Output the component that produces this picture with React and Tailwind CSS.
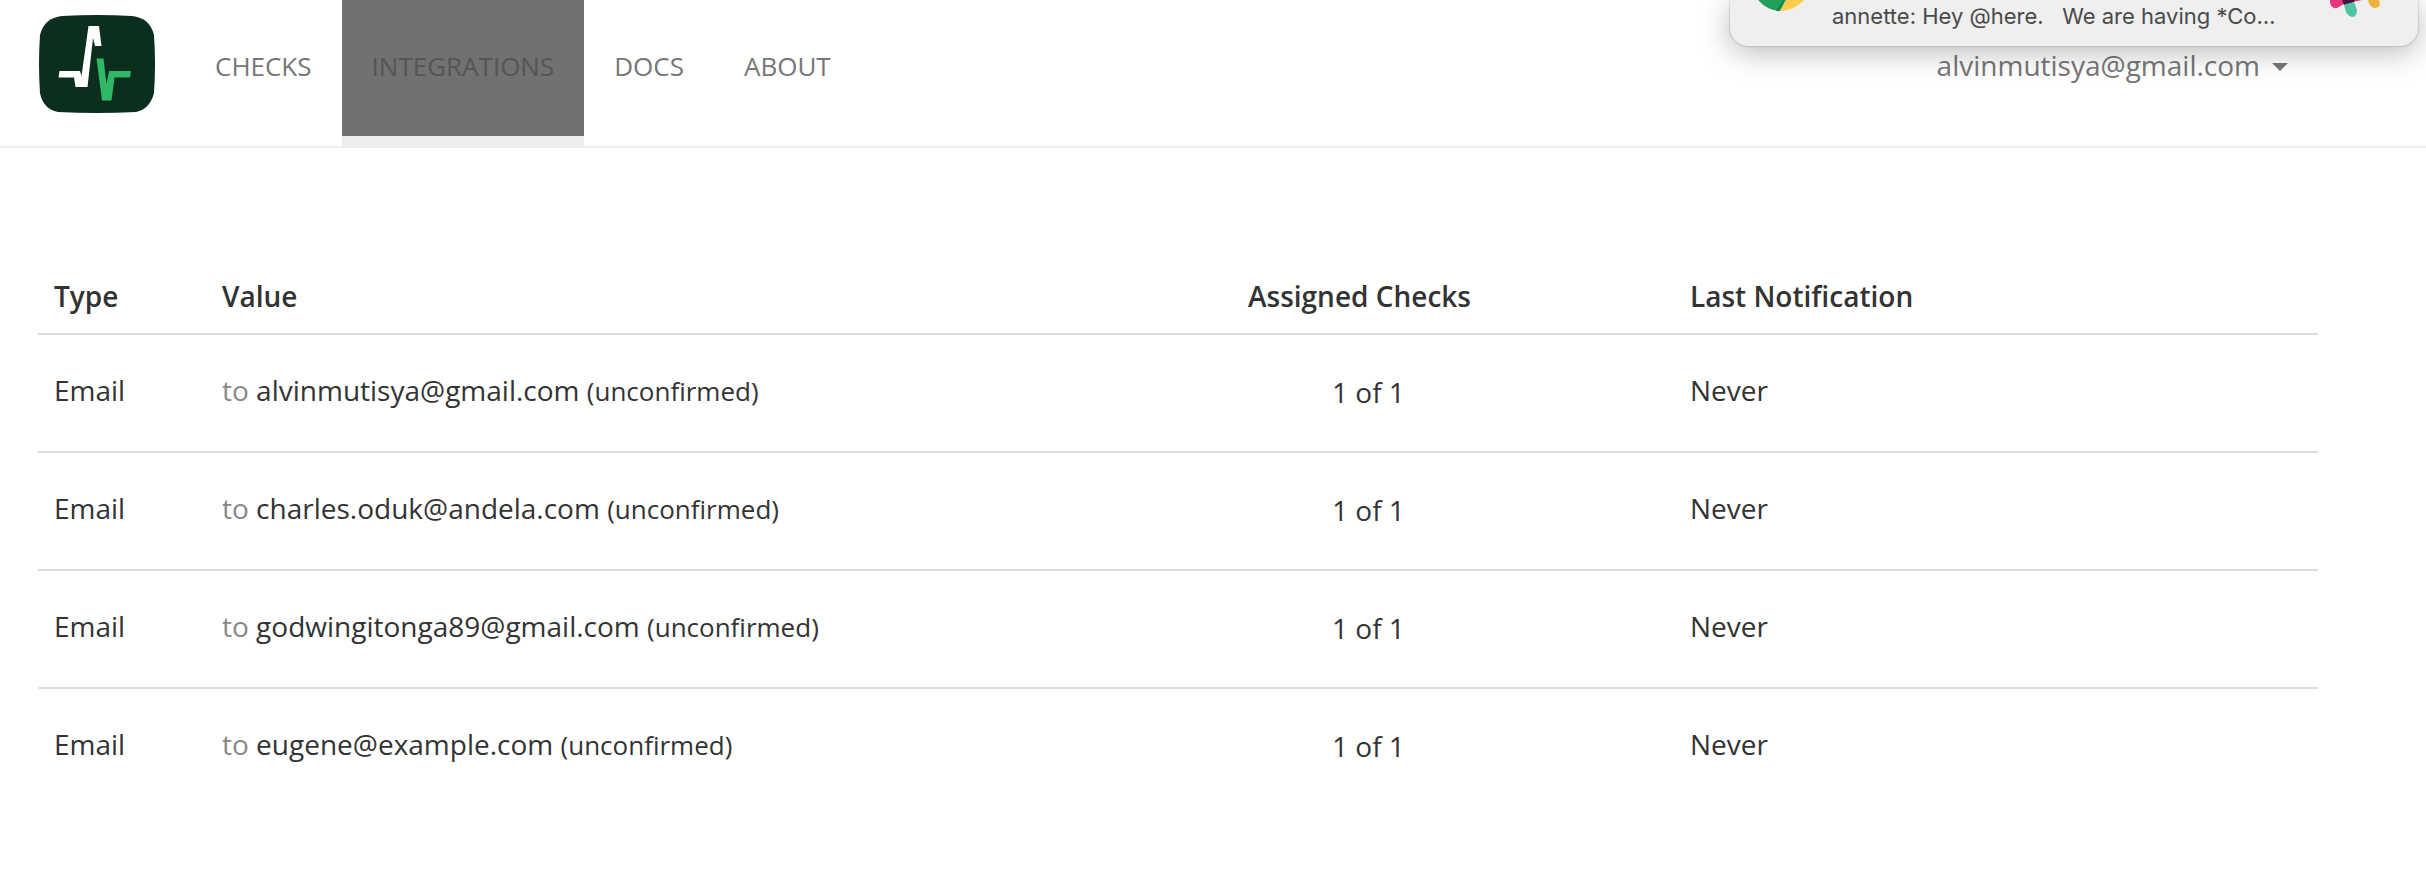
const navItems = [
  { label: "CHECKS" },
  { label: "INTEGRATIONS", active: true },
  { label: "DOCS" },
  { label: "ABOUT" },
];

const channels = [
  "alvinmutisya@gmail.com",
  "charles.oduk@andela.com",
  "godwingitonga89@gmail.com",
  "eugene@example.com",
];

function Logo() {
  return (
    <svg className="h-[98px] w-[116px]" viewBox="0 0 116 98" role="img" aria-label="Healthchecks">
      <path
        d="M23 1 Q58 -1 93 1 Q111 3 115 20 Q117 49 115 78 Q111 94 97 97 Q58 99 19 97 Q4 94 1 78 Q-1 49 1 20 Q5 3 23 1 Z"
        fill="#0b2e1d"
      />
      <path
        d="M20.500 56 H41 L42.500 61 L49.500 11 H60 L62.500 31 H56 L54 23 L48.500 72 H36.500 L35 62.500 H19.500 Z"
        fill="#fff"
      />
      <path d="M57.500 43.500 H64.500 L67.500 69 L70 56 H92 L91 62.500 H75.500 L72.500 85.500 H63 Z" fill="#2fb966" />
    </svg>
  );
}

function ChromeIcon() {
  return (
    <svg className="h-3 w-14 shrink-0" viewBox="0 0 56 12" aria-hidden="true">
      <path d="M4 0 Q14 11 26 11 L32 0 Z" fill="#239f5c" />
      <path d="M32 0 H50 Q40 11 26 11 Z" fill="#fecb4e" />
      <path d="M25 11 L31 0 H29 L22 11 Z" fill="#178349" />
    </svg>
  );
}

function SlackIcon() {
  return (
    <svg className="h-5 w-14 shrink-0" viewBox="0 0 56 20" aria-hidden="true">
      <path d="M4 0 H36 L18 4 L11 8 Q5 9 4 2 Z" fill="#e8367c" />
      <path d="M16 0 H29 L28 2 L18 5 Z" fill="#40173f" />
      <path d="M18 5 L28 2 L31 10 Q31 17 26 17 Q22 16 20 12 Z" fill="#52c3a3" />
      <path d="M42 0 H53 Q56 7 49 8 Q44 8 42 0 Z" fill="#ecb33c" />
    </svg>
  );
}

function Notification() {
  return (
    <aside className="absolute top-0 right-2 flex h-[46px] w-[688px] items-start rounded-b-[18px] bg-[#efefef] pl-6 pr-9 font-[Inter,sans-serif] text-[22px] leading-8 text-[#4a4a4a] shadow-[0_6px_30px_rgba(0,0,0,0.28),0_0_2px_rgba(0,0,0,0.35)]">
      <ChromeIcon />
      <p className="ml-[22px] grow whitespace-pre">annette: Hey @here.   We are having *Co…</p>
      <SlackIcon />
    </aside>
  );
}

export default function App() {
  return (
    <div className="relative min-h-screen overflow-hidden bg-white font-['Open_Sans',sans-serif] text-[28px] leading-10 text-[#333]">
      <header className="flex items-start border-b-2 border-[#eee] pr-[138px] pl-[39px] text-[#777]">
        <a href="#" className="mt-[15px] mr-[30px]">
          <Logo />
        </a>
        <nav className="flex text-[26px]">
          {navItems.map((item) => (
            <a
              key={item.label}
              href="#"
              className={
                item.active
                  ? "border-b-10 border-[#eee] bg-[#717171] px-[30px] pt-[46px] pb-[50px] text-[#555]"
                  : "border-b-10 border-transparent px-[30px] pt-[46px] pb-[50px]"
              }
            >
              {item.label}
            </a>
          ))}
        </nav>
        <button type="button" className="mt-[45px] ml-auto flex items-center gap-3">
          alvinmutisya@gmail.com
          <span className="mt-1 border-x-8 border-t-8 border-x-transparent border-t-[#777]" />
        </button>
      </header>

      <main className="pt-[116px] pr-[108px] pl-[38px]">
        <table className="w-full table-fixed text-left">
          <colgroup>
            <col className="w-[168px]" />
            <col />
            <col className="w-[442px]" />
            <col className="w-[644px]" />
          </colgroup>
          <thead>
            <tr className="border-b-2 border-[#ddd]">
              <th className="px-4 pt-3 pb-[17px] font-semibold">Type</th>
              <th className="px-4 pt-3 pb-[17px] font-semibold">Value</th>
              <th className="px-4 pt-3 pb-[17px] font-semibold">Assigned Checks</th>
              <th className="px-4 pt-3 pb-[17px] font-semibold">Last Notification</th>
            </tr>
          </thead>
          <tbody>
            {channels.map((email) => (
              <tr key={email} className="border-b-2 border-[#ddd] last:border-b-0">
                <td className="px-4 pt-[35px] pb-[41px]">Email</td>
                <td className="px-4 pt-[35px] pb-[41px]">
                  <span className="text-[#888]">to</span> {email}{" "}
                  <span className="text-[26px] leading-none">(unconfirmed)</span>
                </td>
                <td className="pt-[37px] pr-4 pb-[39px] pl-[100px]">1 of 1</td>
                <td className="px-4 pt-[35px] pb-[41px]">Never</td>
              </tr>
            ))}
          </tbody>
        </table>
      </main>

      <Notification />
    </div>
  );
}
